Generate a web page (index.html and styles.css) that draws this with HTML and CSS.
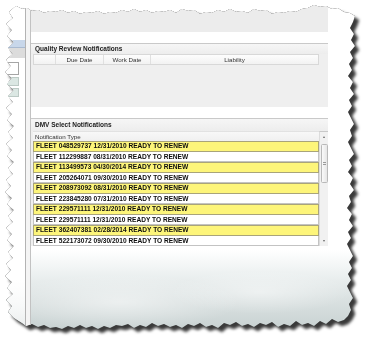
FILE: index.html
```html
<!DOCTYPE html>
<html>
<head>
<meta charset="utf-8">
<link rel="stylesheet" href="styles.css">
</head>
<body>
<div class="stage">
  <div class="paper">
    <div class="sidebar">
      <div class="tab-blue"></div>
      <div class="tab-gray"></div>
      <div class="side-box"></div>
      <div class="side-item"></div>
      <div class="side-item"></div>
    </div>
    <div class="gutter"></div>
    <div class="main">
      <div class="topbar"></div>
      <div class="sect qr">
        <div class="sect-title">Quality Review Notifications</div>
        <div class="qr-head">
          <div class="qh"></div>
          <div class="qh">Due Date</div>
          <div class="qh">Work Date</div>
          <div class="qh">Liability</div>
        </div>
        <div class="qr-body"></div>
      </div>
      <div class="sect dmv">
        <div class="sect-title dmv-title">DMV Select Notifications</div>
        <div class="dmv-grid">
          <div class="nt-head">Notification Type</div>
          <div class="rows">
            <div class="row y">FLEET 048529737 12/31/2010 READY TO RENEW</div>
            <div class="row">FLEET 112299887 08/31/2010 READY TO RENEW</div>
            <div class="row y">FLEET 113499573 04/30/2014 READY TO RENEW</div>
            <div class="row">FLEET 205264071 09/30/2010 READY TO RENEW</div>
            <div class="row y">FLEET 208973092 08/31/2010 READY TO RENEW</div>
            <div class="row">FLEET 223845280 07/31/2010 READY TO RENEW</div>
            <div class="row y">FLEET 229571111 12/31/2010 READY TO RENEW</div>
            <div class="row">FLEET 229571111 12/31/2010 READY TO RENEW</div>
            <div class="row y">FLEET 362407381 02/28/2014 READY TO RENEW</div>
            <div class="row">FLEET 522173072 09/30/2010 READY TO RENEW</div>
          </div>
          <div class="scroll">
            <div class="sb-btn"><span class="arr-up"></span></div>
            <div class="thumb"><span class="grip"></span></div>
            <div class="sb-fill"></div>
            <div class="sb-btn"><span class="arr-down"></span></div>
          </div>
        </div>
      </div>
    </div>
  </div>
</div>
</body>
</html>
```
FILE: styles.css
```css
* { box-sizing: border-box; margin: 0; padding: 0; }
html, body { width: 372px; height: 348px; background: #fff; overflow: hidden; }
body { font-family: "Liberation Sans", Arial, sans-serif; color: #222; }

.stage {
  width: 372px; height: 348px;
  filter: drop-shadow(0 0 0.6px #1a1a1a) drop-shadow(4px 4px 1.8px rgba(35,35,35,0.9));
}

.paper {
  width: 372px; height: 348px;
  display: flex;
  background:
    radial-gradient(ellipse 120px 28px at 120px 302px, rgba(255,255,255,0.5), rgba(255,255,255,0) 100%),
    radial-gradient(ellipse 90px 22px at 260px 292px, rgba(255,255,255,0.45), rgba(255,255,255,0) 100%),
    linear-gradient(180deg, #fff 0, #fff 250px, #eef2f2 272px, #dbe2e2 298px, #c8d2d2 330px);
  clip-path: polygon(
    16px 6px, 22px 9px, 27px 8px, 32px 11px, 38px 10px, 44px 13px, 50px 11px, 56px 12px, 62px 10px, 68px 13px,
    74px 11px, 80px 14px, 86px 12px, 92px 13px, 98px 11px, 104px 14px, 110px 12px, 116px 13px, 122px 10px, 128px 12px,
    134px 9px, 140px 12px, 146px 10px, 152px 13px, 158px 11px, 164px 12px, 170px 10px, 176px 13px, 182px 9px, 188px 11px,
    194px 10px, 200px 14px, 206px 12px, 212px 13px, 218px 10px, 224px 12px, 230px 9px, 236px 12px, 242px 11px, 248px 13px,
    254px 9px, 260px 11px, 266px 10px, 272px 14px, 278px 12px, 284px 13px, 290px 11px, 296px 12px, 302px 9px, 308px 8px,
    314px 5px, 320px 7px, 326px 6px, 332px 9px, 338px 8px, 344px 12px, 350px 13px, 355px 16px,
    353px 22px, 350px 28px, 354px 34px, 351px 40px, 355px 46px, 350px 52px, 353px 58px, 349px 64px, 352px 70px, 348px 76px,
    353px 82px, 350px 88px, 354px 94px, 349px 100px, 352px 106px, 348px 112px, 351px 118px, 354px 124px, 350px 130px, 352px 136px,
    348px 142px, 351px 148px, 354px 154px, 349px 160px, 352px 166px, 348px 172px, 353px 178px, 350px 184px, 354px 190px, 349px 196px,
    351px 202px, 347px 208px, 352px 214px, 349px 220px, 353px 226px, 348px 232px, 351px 238px, 347px 244px, 350px 250px, 353px 256px,
    349px 262px, 352px 268px, 348px 274px, 351px 280px, 347px 286px, 350px 292px, 353px 298px, 349px 304px, 351px 310px, 348px 316px,
    344px 320px, 338px 322px, 332px 319px, 326px 324px, 320px 321px, 314px 326px, 308px 323px, 302px 325px, 296px 321px, 290px 326px,
    284px 324px, 278px 327px, 272px 322px, 266px 325px, 260px 323px, 254px 327px, 248px 324px, 242px 326px, 236px 322px, 230px 325px,
    224px 323px, 218px 328px, 212px 325px, 206px 327px, 200px 323px, 194px 326px, 188px 324px, 182px 328px, 176px 325px, 170px 327px,
    164px 324px, 158px 326px, 152px 323px, 146px 327px, 140px 325px, 134px 328px, 128px 324px, 122px 326px, 116px 325px, 110px 328px,
    104px 326px, 98px 329px, 92px 326px, 86px 328px, 80px 325px, 74px 328px, 68px 326px, 62px 329px, 56px 327px, 50px 328px,
    44px 325px, 38px 327px, 32px 324px, 26px 326px, 22px 323px,
    14px 318px, 8px 312px, 12px 306px, 6px 300px, 13px 294px, 7px 288px, 12px 282px, 5px 276px, 11px 270px, 6px 264px,
    13px 258px, 8px 252px, 14px 246px, 7px 240px, 12px 234px, 6px 228px, 13px 222px, 8px 216px, 14px 210px, 7px 204px,
    12px 198px, 5px 192px, 11px 186px, 6px 180px, 13px 174px, 8px 168px, 14px 162px, 7px 156px, 12px 150px, 6px 144px,
    13px 138px, 8px 132px, 14px 126px, 7px 120px, 12px 114px, 6px 108px, 13px 102px, 8px 96px, 14px 90px, 7px 84px,
    12px 78px, 5px 72px, 11px 66px, 6px 60px, 13px 54px, 8px 48px, 14px 42px, 7px 36px, 12px 30px, 6px 24px,
    13px 18px, 9px 12px
  );
}

/* left navigation strip */
.sidebar {
  width: 26px; flex: none;
  border-right: 1px solid #b3b3b3;
  padding-top: 40px;
  display: flex; flex-direction: column; align-items: flex-end;
  background: linear-gradient(180deg, #fff 0, #fff 280px, rgba(255,255,255,0.6) 330px);
}
.tab-blue { width: 25px; height: 8px; background: #c8d7ea; border-bottom: 1px solid #a9bad0; }
.tab-gray { width: 25px; height: 10px; background: #dcdcdc; }
.side-box { margin-top: 4px; margin-right: 6px; width: 12px; height: 13px; background: #fff; border: 1px solid #a5a5a5; border-left: none; }
.side-item { margin-top: 2px; margin-right: 6px; width: 12px; height: 9px; background: #dbe7e3; border: 1px solid #bccac5; border-left: none; }

.gutter { width: 5px; flex: none; background: #f4f4f4; border-right: 1px solid #c2c2c2; }

.main { flex: 1; display: flex; flex-direction: column; }

.topbar { width: 297px; height: 32px; background: #ececec; }

.sect { width: 297px; margin-top: 11px; border-top: 1px solid #c9c9c9; background: #efefef; }
.sect-title {
  height: 10px; line-height: 10px; padding-left: 4px;
  font-size: 6.5px; font-weight: bold; color: #1a1a1a;
  background: linear-gradient(#f6f6f6, #ededed);
}
.qr-head {
  margin-left: 2px; width: 286px; height: 11px;
  display: grid; grid-template-columns: 22px 48px 47px 1fr;
  background: linear-gradient(#fdfdfd, #f2f2f2);
  border: 1px solid #d8d8d8;
}
.qh {
  font-size: 6.2px; line-height: 9px; text-align: center; color: #333;
  border-right: 1px solid #e0e0e0;
}
.qh:last-child { border-right: none; }
.qr-body { height: 42px; }

.dmv-title { height: 12px; line-height: 12px; }
.dmv-grid {
  display: grid;
  grid-template-columns: 2px 286px 9px;
  grid-template-rows: 10px auto;
}
.nt-head {
  grid-column: 2; grid-row: 1;
  font-size: 6.2px; line-height: 10px; padding-left: 2px; color: #333;
  background: linear-gradient(#f8f8f8, #f0f0f0);
  border-top: 1px solid #e2e2e2;
}
.rows { grid-column: 2; grid-row: 2; background: #fff; }
.row {
  height: 10.5px; line-height: 9.5px;
  padding-left: 2px;
  font-size: 6.6px; font-weight: bold; color: #0d0d0d;
  background: #fff;
  border: 1px solid #c3c3c3; border-top: none;
  white-space: nowrap; overflow: hidden;
}
.row.y { background: #fdf57a; border-color: #a9a47a; border-top: 1px solid #a9a47a; line-height: 8.5px; }

.scroll {
  grid-column: 3; grid-row: 1 / span 2;
  background: #f1f1f1; border-left: 1px solid #dcdcdc;
  display: flex; flex-direction: column; align-items: center;
  border-top: 1px solid #c8c8c8;
}
.sb-btn { height: 10px; width: 8px; display: flex; align-items: center; justify-content: center; }
.arr-up { width: 0; height: 0; border-left: 1.5px solid transparent; border-right: 1.5px solid transparent; border-bottom: 2px solid #666; }
.arr-down { width: 0; height: 0; border-left: 1.5px solid transparent; border-right: 1.5px solid transparent; border-top: 2px solid #666; }
.thumb {
  margin-top: 2px; width: 7px; height: 39px;
  border: 1px solid #b9b9b9; border-radius: 1.5px;
  background: linear-gradient(90deg, #fafafa, #e6e6e6);
  display: flex; align-items: center; justify-content: center;
}
.grip { width: 3px; height: 3px; border-top: 1px solid #9a9a9a; border-bottom: 1px solid #9a9a9a; }
.sb-fill { flex: 1; }
```
